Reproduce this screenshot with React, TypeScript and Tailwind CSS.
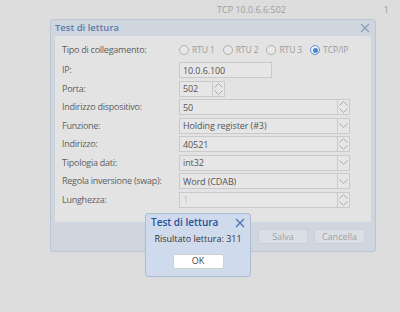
const font = { fontFamily: '"Open Sans", "DejaVu Sans", sans-serif' };

const Chevron = ({ up = false }: { up?: boolean }) => (
  <svg width="9" height="5" viewBox="0 0 9 5" className="block">
    <path
      d={up ? "M0.5 4.5 L4.5 0.5 L8.5 4.5" : "M0.5 0.5 L4.5 4.5 L8.5 0.5"}
      fill="none"
      stroke="#a9a9a9"
      strokeWidth="1"
    />
  </svg>
);

const Spin = () => (
  <div className="flex h-full w-[12px] flex-col items-center justify-center gap-[2px] border-l border-[#cacaca]">
    <Chevron up />
    <Chevron />
  </div>
);

const Drop = () => (
  <div className="flex h-full w-[12px] items-center justify-center border-l border-[#cacaca]">
    <Chevron />
  </div>
);

const Field = ({
  value,
  width = "w-[171px]",
  kind,
  disabled = false,
}: {
  value: string;
  width?: string;
  kind?: "spin" | "drop";
  disabled?: boolean;
}) => (
  <div
    className={`flex h-[16px] items-center border border-[#cacaca] bg-[#e6e6e6] ${width}`}
  >
    <span
      className={`flex-1 pl-[3px] text-[9px] leading-none tracking-[-0.1px] ${
        disabled ? "text-[#c4c4c4]" : "text-[#555]"
      }`}
    >
      {value}
    </span>
    {kind === "spin" && <Spin />}
    {kind === "drop" && <Drop />}
  </div>
);

const rows = [
  { label: "IP:", value: "10.0.6.100", width: "w-[93px]" },
  { label: "Porta:", value: "502", width: "w-[46px]", kind: "spin" as const },
  { label: "Indirizzo dispositivo:", value: "50", kind: "spin" as const },
  { label: "Funzione:", value: "Holding register (#3)", kind: "drop" as const },
  { label: "Indirizzo:", value: "40521", kind: "spin" as const },
  { label: "Tipologia dati:", value: "int32", kind: "drop" as const },
  { label: "Regola inversione (swap):", value: "Word (CDAB)", kind: "drop" as const },
  { label: "Lunghezza:", value: "1", kind: "spin" as const, disabled: true },
];

const radios = ["RTU 1", "RTU 2", "RTU 3", "TCP/IP"];

const Cross = ({ color, size }: { color: string; size: number }) => (
  <svg width={size} height={size} viewBox="0 0 10 10">
    <path d="M1 1 L9 9 M9 1 L1 9" stroke={color} strokeWidth="1.2" fill="none" />
  </svg>
);

export default function App() {
  return (
    <div className="relative h-[312px] w-[400px] overflow-hidden bg-[#dddddd]" style={font}>
      <div className="flex h-[19px] items-center text-[9px] text-[#9c9c9c]">
        <span className="ml-[217px]">TCP 10.0.6.6:502</span>
        <span className="ml-auto mr-[11px]">1</span>
      </div>

      <div className="absolute left-[50px] top-[19px] flex h-[233px] w-[326px] flex-col rounded-[3px] border border-[#bcc6d2] bg-[#cfd6df]">
        <div className="flex h-[16px] items-center justify-between pl-[4px] pr-[5px]">
          <span className="text-[9.5px] font-semibold text-[#5c7aab]">Test di lettura</span>
          <Cross color="#8a9cb8" size={10} />
        </div>
        <div className="mx-[4px] flex h-[186px] flex-col bg-[#e3e3e3] pl-[7px] pt-[6px]">
          <div className="flex h-[16px] items-center">
            <span className="w-[117px] text-[9px] tracking-[-0.25px] text-[#5e5e5e]">
              Tipo di collegamento:
            </span>
            <div className="flex items-center gap-[8px]">
              {radios.map((r, i) => (
                <div key={r} className="flex items-center gap-[3px]">
                  {i === 3 ? (
                    <span className="flex h-[10px] w-[10px] items-center justify-center rounded-full border border-[#5d8fd8] bg-[#f0f0f0]">
                      <span className="h-[5px] w-[5px] rounded-full bg-[#4a83d6]" />
                    </span>
                  ) : (
                    <span className="h-[10px] w-[10px] rounded-full border border-[#b0b0b0] bg-[#e8e8e8]" />
                  )}
                  <span className="text-[8.5px] tracking-[-0.1px] text-[#9a9a9a]">{r}</span>
                </div>
              ))}
            </div>
          </div>
          <div className="mt-[4px] flex flex-col gap-[2.5px]">
            {rows.map((r) => (
              <div key={r.label} className="flex h-[16px] items-center">
                <span className="w-[117px] text-[9px] tracking-[-0.25px] text-[#5e5e5e]">
                  {r.label}
                </span>
                <Field value={r.value} width={r.width} kind={r.kind} disabled={r.disabled} />
              </div>
            ))}
          </div>
        </div>
        <div className="flex flex-1 items-center justify-end gap-[6px] pr-[10px]">
          <div className="flex h-[15px] w-[50px] items-center justify-center rounded-[2px] border border-[#c9d0d8] bg-[#dadfe5] text-[9px] text-[#a2a2a2]">
            Salva
          </div>
          <div className="flex h-[15px] w-[51px] items-center justify-center rounded-[2px] border border-[#c9d0d8] bg-[#dadfe5] text-[9px] text-[#a2a2a2]">
            Cancella
          </div>
        </div>
      </div>

      <div className="absolute left-[145px] top-[213px] flex h-[64px] w-[106px] flex-col rounded-[3px] border border-[#a9bcd6] bg-[#cfdbed]">
        <div className="flex h-[17px] items-center justify-between pl-[5px] pr-[5px]">
          <span className="text-[10px] font-semibold text-[#24509a]">Test di lettura</span>
          <Cross color="#4a72ad" size={10} />
        </div>
        <div className="mt-[1px] text-center text-[9px] text-[#333]">Risultato lettura: 311</div>
        <div className="mt-[8px] flex justify-center">
          <div className="flex h-[15px] w-[51px] items-center justify-center rounded-[2px] border border-[#d0d0d0] bg-white text-[9px] text-[#444]">
            OK
          </div>
        </div>
      </div>
    </div>
  );
}
